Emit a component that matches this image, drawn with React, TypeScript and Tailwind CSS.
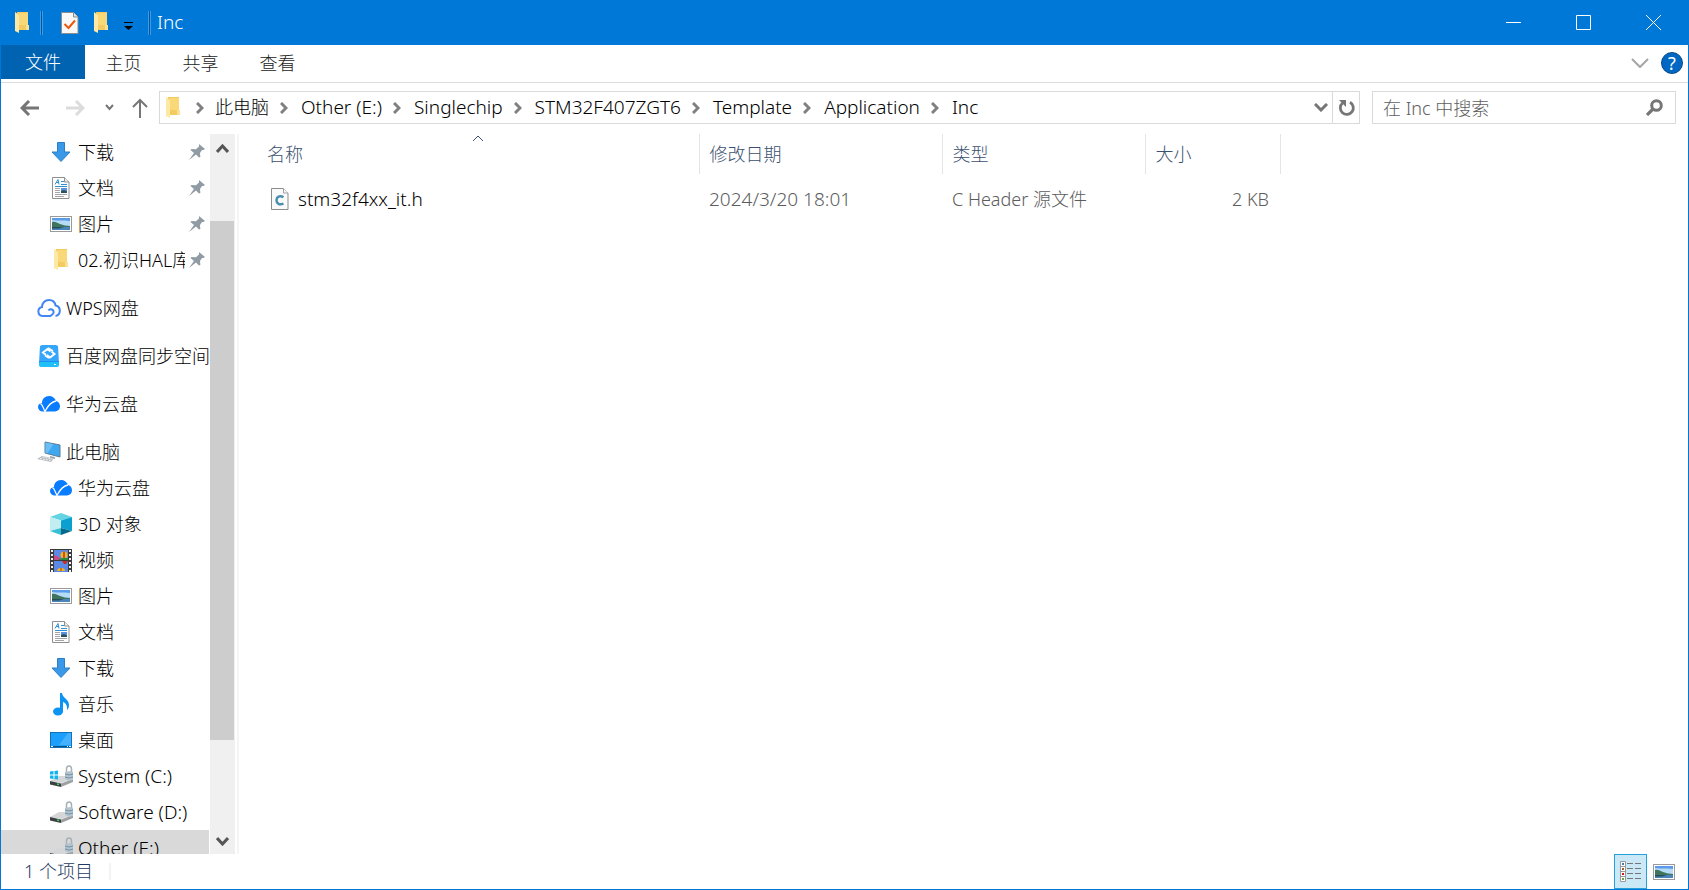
import React from 'react';

type NavItem = {
  label: string;
  icon: React.ReactNode;
  level?: 1 | 2;
  latin?: boolean;
  pinned?: boolean;
  gap?: boolean;
  active?: boolean;
};

/* ---------- Icons ---------- */

function FolderIcon() {
  return (
    <svg width="16" height="22" viewBox="0 0 16 22" aria-hidden="true">
      <path d="M3 0h11v13l1 1v4H3z" fill="#f3cb63" />
      <path d="M5 1h9v12H5z" fill="#f9d877" />
      <path d="M1 0l4 3v18l-4-2z" fill="#fde9a5" />
      <path d="M12 13h3v5h-3z" fill="#fbe193" />
    </svg>
  );
}

function CheckDocIcon() {
  return (
    <svg width="18" height="22" viewBox="0 0 18 22" aria-hidden="true">
      <path d="M.5.5h12l4.500 4.500v16.500H.5z" fill="#f8f8f8" stroke="#8c8c8c" />
      <path d="M12.500.5v4.500H17" fill="#e4e4e4" stroke="#8c8c8c" />
      <path d="M3.500 12l4 4L14 8.500" fill="none" stroke="#e8590c" strokeWidth="2" />
    </svg>
  );
}

function DownloadIcon() {
  return (
    <svg width="20" height="20" viewBox="0 0 20 20" aria-hidden="true">
      <path d="M6.500.5h7V10h5.500L10 19.500 1 10h5.500z" fill="#3a98e8" stroke="#2b7fc6" />
    </svg>
  );
}

function DocumentIcon() {
  return (
    <svg width="18" height="22" viewBox="0 0 18 22" aria-hidden="true">
      <path d="M.5.5h12l4.500 4.500v16.500H.5z" fill="#fff" stroke="#8f8f8f" />
      <path d="M12.500.5v4.500H17" fill="#eee" stroke="#8f8f8f" />
      <path d="M3 7.500l3-5 1 5M4 5.500h3" fill="none" stroke="#2d8fcf" />
      <path d="M9 4.500h3M9 7.500h6M3 9.500h12" stroke="#2d8fcf" />
      <path d="M3 11.500h5M3 13.500h5M3 15.500h5M3 17.500h12M3 19.500h9" stroke="#a5a5a5" />
      <path d="M9 11h6v5H9z" fill="#5b8fe0" />
      <path d="M9 14l3-1 3 1.500V16H9z" fill="#27535a" />
    </svg>
  );
}

function PictureIcon() {
  return (
    <svg width="22" height="16" viewBox="0 0 22 16" aria-hidden="true">
      <rect x=".5" y=".5" width="21" height="15" fill="#fff" stroke="#9a9a9a" />
      <rect x="2" y="2" width="18" height="12" fill="#5c9bea" />
      <path d="M2 4c6 1 10 0 18 1v5H2z" fill="#b6dcf5" />
      <path d="M2 6c3-1 5 1 8 2s7 2 10 2v1H2z" fill="#3f7560" />
      <path d="M2 11h18v3H2z" fill="#4a84ba" />
      <path d="M2 11h12l-5 1.500H2z" fill="#244f58" />
    </svg>
  );
}

function PinIcon() {
  return (
    <svg width="16" height="16" viewBox="0 0 16 16" aria-hidden="true">
      <path d="M10 0l6 5-1.500 1-1.500 0-2 3 .3 4-1.300.5-3-3L0 16l5-7-3.500-3L2.500 5l4.500.2 3-2.700z" fill="#919ba3" />
    </svg>
  );
}

function WpsCloudIcon() {
  return (
    <svg width="24" height="18" viewBox="0 0 24 18" fill="none" stroke="#4285f4" strokeWidth="2" aria-hidden="true">
      <path d="M14 17H5.500a4.500 4.500 0 0 1-.5-8.900C5 4 8 1 12 1c3.500 0 6 2.400 6.600 5.600A5.300 5.300 0 0 1 18.500 17" />
      <path d="M11.500 11.500a2.800 2.800 0 1 1 4 3.800c-1 1.200-2 1.700-3.500 1.700" />
    </svg>
  );
}

function BaiduDiskIcon() {
  return (
    <svg width="20" height="22" viewBox="0 0 20 22" aria-hidden="true">
      <path d="M3 0h14l2 1 1 17H0L1 1z" fill="#35a6fb" />
      <path d="M0 16h20v4a2 2 0 0 1-2 2H2a2 2 0 0 1-2-2z" fill="#1fc0f8" />
      <path d="M0 16.500h20" stroke="#1b8ff0" />
      <path d="M11.500 6.500L8.500 4 4 7.500l3 2.500M8 10l3 2.500L15.500 9l-3-2.500" fill="none" stroke="#fff" strokeWidth="2" />
      <path d="M9 3l5 3M6 10.500l4 2.500" stroke="#fff" strokeWidth="1.500" />
      <path d="M15 19.500h2" stroke="#fff" />
    </svg>
  );
}

function HuaweiCloudIcon() {
  return (
    <svg width="22" height="16" viewBox="0 0 22 16" aria-hidden="true">
      <path d="M4 7C4 3 7 0 11 0c3.500 0 6 2 7 5 2.500.6 4 2.600 4 5.300 0 3-2.300 5.200-5 5.200H5C2 15.500 0 13.700 0 11c0-2 1.500-3.800 4-4z" fill="#0a7cff" />
      <path d="M2.500 7.500C5 9 5 12 7 15.500 9 12 11 6.500 18 5" fill="none" stroke="#fff" strokeWidth="1.300" />
    </svg>
  );
}

function ComputerIcon() {
  return (
    <svg width="24" height="22" viewBox="0 0 24 22" aria-hidden="true">
      <path d="M8 1l15 3v12L8 12z" fill="#3da8f0" stroke="#5a7c96" />
      <path d="M8.500 1.500l8 1.700-6 9L8.500 12z" fill="#6bbdf5" />
      <path d="M13 15l5 1v2l-5-1z" fill="#a2abb2" />
      <path d="M5 15l12 2.500-3 3.500L0 18z" fill="#b4babe" />
      <path d="M3 17.500l11 2M5.500 16l10 2" stroke="#f1f3f4" strokeDasharray="2 1" />
    </svg>
  );
}

function CubeIcon() {
  return (
    <svg width="22" height="22" viewBox="0 0 22 22" aria-hidden="true">
      <path d="M11 0l11 4-11 3.500L0 4z" fill="#64d3e4" />
      <path d="M0 4l11 3.500V15L0 18z" fill="#c2eef2" />
      <path d="M22 4L11 7.500V15l11 3z" fill="#0aa0d0" />
      <path d="M0 18l11-3v7z" fill="#36bfd3" />
      <path d="M22 18l-11-3v7z" fill="#06698c" />
    </svg>
  );
}

function VideoIcon() {
  return (
    <svg width="22" height="23" viewBox="0 0 22 23" aria-hidden="true">
      <path d="M0 0h22v23H0z" fill="#3a3a3a" />
      <path d="M2 1v22M20 1v22" stroke="#f2f2f2" strokeWidth="2" strokeDasharray="2 2" />
      <path d="M4 1h14v10H4zM4 12h14v11H4z" fill="#5a8ae6" />
      <path d="M4 6l3 1 3 2v2H4z" fill="#c74b8a" />
      <circle cx="14" cy="6" r="3.500" fill="#f1b51c" />
      <path d="M14 2.500v7" stroke="#c23321" strokeWidth="1.500" />
      <path d="M9 10l4-1h5v2H9z" fill="#2c8a3b" />
      <path d="M12 12h6l-2 3h-2z" fill="#c23321" />
      <path d="M7 22a4 3 0 0 1 8 0z" fill="#f1b51c" />
      <path d="M11 19v3" stroke="#c23321" />
    </svg>
  );
}

function MusicIcon() {
  return (
    <svg width="18" height="23" viewBox="0 0 18 23" aria-hidden="true">
      <ellipse cx="6" cy="18.500" rx="5" ry="4" fill="#0d94f0" />
      <path d="M8 0h2c.5 5 7 6 7 12 0 2-.7 4-2 5 .5-4-1-7-4-8v10H8z" fill="#0d94f0" />
    </svg>
  );
}

function DesktopIcon() {
  return (
    <svg width="22" height="16" viewBox="0 0 22 16" aria-hidden="true">
      <rect x=".5" y=".5" width="21" height="15" fill="#1b9ffb" stroke="#1272b8" />
      <path d="M18 1h3v12H9z" fill="#43b1fd" />
      <path d="M1 14.500h20" stroke="#0b4f87" />
      <path d="M1 14.500h2M17 14.500h1M19 14.500h2" stroke="#fff" />
    </svg>
  );
}

function DriveIcon({ system = false }: { system?: boolean }) {
  return (
    <svg width="24" height="22" viewBox="0 0 24 22" aria-hidden="true">
      <path d="M1 16l9-5h11l3 3-12 4z" fill="#d4d6d8" />
      <path d="M1 16l11 2.500V22L1 19.500z" fill="#3d4043" />
      <path d="M12 18.500l12-4.500v3L12 22z" fill="#9da1a4" />
      <path d="M8 19l2 .5" stroke="#3ed45a" strokeWidth="1.500" />
      <path d="M17.500 7V4a2.500 3 0 0 1 5 0v4" fill="none" stroke="#a7b0b6" strokeWidth="1.500" />
      <path d="M16 7l5-1 3 1v8l-4 1-4-2z" fill="#b5c3cd" />
      <path d="M16 9l4 1 4-1M16 12l4 1 4-1" fill="none" stroke="#6f93aa" />
      {system && <path d="M1 6.500L4.500 6v3.500H1zM5.500 6L9 5.500v4H5.500zM1 10.500h3.500V14L1 13.500zM5.500 10.500H9v4L5.500 14z" fill="#12b4ee" />}
    </svg>
  );
}

function HeaderFileIcon() {
  return (
    <svg width="18" height="22" viewBox="0 0 18 22" aria-hidden="true">
      <path d="M.5.5h12l4.500 4.500v16.500H.5z" fill="#fafafa" stroke="#8c8c8c" />
      <path d="M12.500.5v4.500H17" fill="#fff" stroke="#a0a0a0" />
      <path d="M12.500 9.200C8.500 7 5.500 9 5.500 12.300s3 5.200 7 3.200" fill="none" stroke="#4a8fae" strokeWidth="2.500" />
    </svg>
  );
}

function Chevron({ className = '', d, w, h, stroke = 2 }: { className?: string; d: string; w: number; h: number; stroke?: number }) {
  return (
    <svg width={w} height={h} viewBox={`0 0 ${w} ${h}`} fill="none" stroke="currentColor" strokeWidth={stroke} className={className} aria-hidden="true">
      <path d={d} />
    </svg>
  );
}

/* ---------- Data ---------- */

const navItems: NavItem[] = [
  { label: '下载', icon: <DownloadIcon />, pinned: true },
  { label: '文档', icon: <DocumentIcon />, pinned: true },
  { label: '图片', icon: <PictureIcon />, pinned: true },
  { label: '02.初识HAL库', icon: <FolderIcon />, pinned: true },
  { label: 'WPS网盘', icon: <WpsCloudIcon />, level: 1, gap: true },
  { label: '百度网盘同步空间', icon: <BaiduDiskIcon />, level: 1, gap: true },
  { label: '华为云盘', icon: <HuaweiCloudIcon />, level: 1, gap: true },
  { label: '此电脑', icon: <ComputerIcon />, level: 1, gap: true },
  { label: '华为云盘', icon: <HuaweiCloudIcon /> },
  { label: '3D 对象', icon: <CubeIcon /> },
  { label: '视频', icon: <VideoIcon /> },
  { label: '图片', icon: <PictureIcon /> },
  { label: '文档', icon: <DocumentIcon /> },
  { label: '下载', icon: <DownloadIcon /> },
  { label: '音乐', icon: <MusicIcon /> },
  { label: '桌面', icon: <DesktopIcon /> },
  { label: 'System (C:)', icon: <DriveIcon system />, latin: true },
  { label: 'Software (D:)', icon: <DriveIcon />, latin: true },
  { label: 'Other (E:)', icon: <DriveIcon />, latin: true, active: true },
];

const crumbs = ['此电脑', 'Other (E:)', 'Singlechip', 'STM32F407ZGT6', 'Template', 'Application', 'Inc'];

/* ---------- Sections ---------- */

function TitleBar() {
  return (
    <header className="flex h-[45px] shrink-0 items-center bg-[#0078d7] text-white">
      <div className="flex flex-1 items-center pl-[13px]">
        <FolderIcon />
        <span className="ml-2.5 h-6 w-[3px] border-x border-[#3c9be6] bg-[#00559b]" />
        <button aria-label="属性" className="ml-[18px]">
          <CheckDocIcon />
        </button>
        <button aria-label="新建文件夹" className="ml-3.5">
          <FolderIcon />
        </button>
        <button aria-label="自定义快速访问工具栏" className="ml-[15px] pt-1.5 text-black">
          <svg width="9" height="8" viewBox="0 0 9 8" aria-hidden="true">
            <path d="M0 0h9v1H0zM0 4h9L4.500 8z" fill="currentColor" />
          </svg>
        </button>
        <span className="ml-[15px] h-6 w-[3px] border-x border-[#3c9be6] bg-[#00559b]" />
        <h1 className="ml-1.5 pb-0.5 text-[19px] leading-6">Inc</h1>
      </div>
      <button aria-label="最小化" className="flex h-full w-[70px] items-center justify-center">
        <Chevron w={15} h={15} d="M0 7.500h15" stroke={1} />
      </button>
      <button aria-label="最大化" className="flex h-full w-[70px] items-center justify-center">
        <Chevron w={15} h={15} d="M.5.5h14v14H.5z" stroke={1} />
      </button>
      <button aria-label="关闭" className="flex h-full w-[70px] items-center justify-center">
        <Chevron w={15} h={15} d="M0 0l15 15M15 0L0 15" stroke={1} />
      </button>
    </header>
  );
}

function RibbonTabs() {
  return (
    <nav className="flex h-[38px] shrink-0 items-start border-b border-[#dadbdc] text-[18px] text-[#222]">
      <button className="h-[34px] w-[84px] bg-[#0063b1] text-white">文件</button>
      {['主页', '共享', '查看'].map((tab) => (
        <button key={tab} className="h-9 w-[77px]">
          {tab}
        </button>
      ))}
      <div className="ml-auto flex h-9 items-center gap-3 pr-[5px]">
        <button aria-label="展开功能区" className="text-[#a5a5a5]">
          <Chevron w={18} h={10} d="M1 1l8 8 8-8" />
        </button>
        <button
          aria-label="帮助"
          className="flex size-[22px] items-center justify-center rounded-full border border-[#0b4a86] bg-[#0067c5] text-[18px] font-normal leading-5 text-white"
        >
          ?
        </button>
      </div>
    </nav>
  );
}

function AddressRow() {
  return (
    <div className="flex h-[51px] shrink-0 items-center pb-0.5 pr-3 text-[#767676]">
      <div className="flex w-[158px] shrink-0 items-center pl-[19px]">
        <button aria-label="后退">
          <Chevron w={19} h={16} d="M19 8H2M9 1L2 8l7 7" stroke={3} />
        </button>
        <button aria-label="前进" className="ml-[27px] text-[#dcdcdc]">
          <Chevron w={19} h={16} d="M0 8h17M10 1l7 7-7 7" stroke={3} />
        </button>
        <button aria-label="最近浏览的位置" className="ml-5">
          <Chevron w={9} h={7} d="M1 1l3.500 4L8 1" stroke={2} />
        </button>
        <button aria-label="上移" className="ml-[18px]">
          <Chevron w={16} h={20} d="M8 20V2M1 9l7-7 7 7" stroke={2} />
        </button>
      </div>
      <div className="flex h-[33px] min-w-0 flex-1 items-stretch border border-[#d9d9d9]">
        <div className="flex min-w-0 flex-1 items-center overflow-hidden pl-[5px] text-black">
          <FolderIcon />
          {crumbs.map((crumb, i) => (
            <React.Fragment key={crumb}>
              <Chevron
                w={8}
                h={12}
                d="M1 1l5 5-5 5"
                stroke={3}
                className={`shrink-0 text-[#808080] ${i === 0 ? 'ml-[15px] mr-[11px]' : 'ml-[11px] mr-[13px]'}`}
              />
              <a href="#" className={`whitespace-nowrap pb-0.5 leading-6 ${i === 0 ? 'text-[18px]' : 'text-[19px]'}`}>
                {crumb}
              </a>
            </React.Fragment>
          ))}
        </div>
        <button aria-label="以前的位置" className="w-[30px] pl-3">
          <Chevron w={14} h={9} d="M1 1l6 6 6-6" stroke={3} />
        </button>
        <button aria-label="刷新" className="flex w-[27px] items-center justify-end border-l border-[#d9d9d9] pr-[3px]">
          <svg width="18" height="18" viewBox="0 0 18 18" fill="none" stroke="currentColor" aria-hidden="true">
            <path d="M12 3.200a6.500 6.500 0 1 1-7.500.8" strokeWidth="2.800" />
            <path d="M1 1h7v7z" fill="currentColor" stroke="none" />
          </svg>
        </button>
      </div>
      <label className="ml-3 flex h-[33px] w-[304px] shrink-0 items-center border border-[#d9d9d9] pl-2.5 pr-3">
        <input
          type="search"
          aria-label="搜索"
          placeholder="在 Inc 中搜索"
          className="min-w-0 flex-1 bg-transparent text-[18px] leading-6 outline-none placeholder:text-[#606060]"
        />
        <svg width="17" height="17" viewBox="0 0 17 17" fill="none" stroke="currentColor" aria-hidden="true">
          <circle cx="10.500" cy="6.500" r="4.800" strokeWidth="3" />
          <path d="M7 10l-6 6" strokeWidth="3.200" />
        </svg>
      </label>
    </div>
  );
}

function Sidebar() {
  return (
    <aside className="flex w-[238px] shrink-0 border-r-2 border-[#f5f5f5]">
      <ul className="min-w-0 flex-1 overflow-hidden">
        {navItems.map((item, i) => (
          <li key={i} className={item.gap ? 'mt-3' : ''}>
            <a
              href="#"
              className={`mr-px flex h-9 items-center ${item.level === 1 ? 'pl-[36px]' : 'pl-[48px]'} ${item.active ? 'bg-[#d9d9d9]' : ''}`}
            >
              <span className="flex w-6 shrink-0 justify-center">{item.icon}</span>
              <span
                className={`ml-[5px] min-w-0 flex-1 overflow-hidden whitespace-nowrap leading-7 ${item.latin ? 'text-[19px]' : 'text-[18px]'}`}
              >
                {item.label}
              </span>
              {item.pinned && (
                <span className="ml-1 mr-1 shrink-0">
                  <PinIcon />
                </span>
              )}
            </a>
          </li>
        ))}
      </ul>
      <div className="mr-0.5 flex w-[25px] flex-col bg-[#f0f0f0] text-[#555]">
        <button aria-label="向上滚动" className="flex h-[29px] items-center justify-center">
          <Chevron w={13} h={9} d="M1 8l5.500-6L12 8" stroke={3} />
        </button>
        <div className="flex-[58]" />
        <div className="mr-px flex-[519] bg-[#cdcdcd]" />
        <div className="flex-[85]" />
        <button aria-label="向下滚动" className="flex h-[29px] items-center justify-center pt-1">
          <Chevron w={13} h={9} d="M1 1l5.500 6L12 1" stroke={3} />
        </button>
      </div>
    </aside>
  );
}

function FileList() {
  return (
    <main className="min-w-0 flex-1 overflow-hidden pl-[18px]">
      <table className="w-[1023px] table-fixed border-collapse text-left text-[18px] text-[#5c5c5c]">
        <colgroup>
          <col className="w-[442px]" />
          <col className="w-[243px]" />
          <col className="w-[203px]" />
          <col className="w-[135px]" />
        </colgroup>
        <thead className="text-[#3a5070]">
          <tr className="h-10">
            <th aria-sort="ascending" className="relative border-r border-[#e5e5e5] pl-2.5 font-light">
              名称
              <Chevron w={12} h={7} d="M1 6l5-5 5 5" stroke={1} className="absolute left-[215px] top-px" />
            </th>
            <th className="border-r border-[#e5e5e5] pl-2.5 font-light">修改日期</th>
            <th className="border-r border-[#e5e5e5] pl-2.5 font-light">类型</th>
            <th className="border-r border-[#e5e5e5] pl-2.5 font-light">大小</th>
          </tr>
        </thead>
        <tbody>
          <tr className="h-[50px]">
            <td className="pl-3.5">
              <a href="#" className="flex items-center gap-[9px] text-[19px] leading-6 text-black">
                <HeaderFileIcon />
                stm32f4xx_it.h
              </a>
            </td>
            <td className="pl-2.5 text-[19px] leading-6">2024/3/20 18:01</td>
            <td className="pl-2.5">C Header 源文件</td>
            <td className="pr-[11px] text-right">2 KB</td>
          </tr>
        </tbody>
      </table>
    </main>
  );
}

function StatusBar() {
  return (
    <footer className="flex h-[35px] shrink-0 items-center pr-[13px] text-[18px] text-[#1f3a5f]">
      <span className="pb-0.5 pl-[23px] leading-6">1 个项目</span>
      <span className="ml-4 h-[17px] w-0.5 bg-[#f3f3f3]" />
      <button aria-label="详细信息" className="ml-auto flex h-[35px] w-[33px] items-center justify-center border border-[#26a0da] bg-[#cbe8f6]">
        <svg width="21" height="21" viewBox="0 0 21 21" aria-hidden="true">
          <path d="M.5.5h5v20h-5zM.5 5.500h5M.5 10.500h5M.5 15.500h5" fill="#fff" stroke="#999" />
          <path d="M2 2h2v2H2z" fill="#3c7fb8" />
          <path d="M2 7h2v2H2z" fill="#a0632c" />
          <path d="M2 12h2v2H2z" fill="#cf1d1d" />
          <path d="M2 17h2v2H2z" fill="#6da544" />
          <path d="M7 2.500h6M15 2.500h6M7 7.500h6M15 7.500h6M7 12.500h6M15 12.500h6M7 17.500h6M15 17.500h6" stroke="#777" />
        </svg>
      </button>
      <button aria-label="大缩略图" className="ml-1.5">
        <PictureIcon />
      </button>
    </footer>
  );
}

export default function App() {
  return (
    <div className="flex h-screen flex-col overflow-hidden border border-t-0 border-[#0078d7] bg-white font-['Noto_Sans','Noto_Sans_CJK_SC',sans-serif] font-light">
      <TitleBar />
      <RibbonTabs />
      <AddressRow />
      <div className="flex min-h-0 flex-1">
        <Sidebar />
        <FileList />
      </div>
      <StatusBar />
    </div>
  );
}
